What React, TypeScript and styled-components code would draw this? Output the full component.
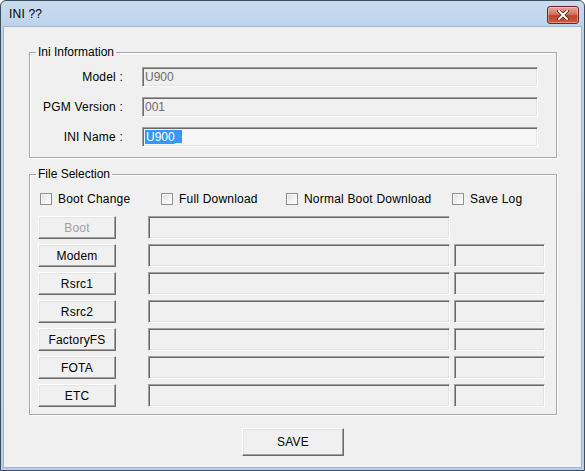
import styled, { createGlobalStyle } from 'styled-components';

const GlobalStyle = createGlobalStyle`
  html, body {
    margin: 0;
    padding: 0;
    background: #ffffff;
  }
  body {
    font-family: "Liberation Sans", Arial, sans-serif;
    font-size: 12px;
    color: #000;
  }
`;

// Window chrome
const Window = styled.div`
  box-sizing: border-box;
  width: 585px;
  height: 471px;
  display: flex;
  flex-direction: column;
  border: 1px solid #3e4e5e;
  border-radius: 6px 6px 0 0;
  background: linear-gradient(to bottom, #c9dbef 0%, #bcd2ea 30px, #b7cfe8 100%);
  padding: 0 2px 2px 2px;
  overflow: hidden;
`;

const TitleBar = styled.div`
  height: 25px;
  display: flex;
  align-items: center;
  justify-content: space-between;
  padding: 0 3px 0 6px;
`;

const Title = styled.span`
  font-size: 12px;
  color: #000;
  letter-spacing: 0.2px;
`;

const CloseButton = styled.div`
  width: 30px;
  height: 16px;
  margin-top: 2px;
  border: 1px solid #6d2620;
  border-radius: 3px;
  background: linear-gradient(to bottom, #e6a59b 0%, #d4735f 45%, #c2412c 55%, #cf5a3f 100%);
  box-shadow: inset 0 0 0 1px rgba(255, 255, 255, 0.35);
  display: flex;
  align-items: center;
  justify-content: center;
`;

const Content = styled.div`
  flex: 1;
  background: #f0f0f0;
  border: 1px solid #9fb6cc;
  display: flex;
  flex-direction: column;
  padding: 18px 24px 0 25px;
`;

// Group boxes
const Group = styled.fieldset<{ $top?: number }>`
  margin: ${(p) => p.$top ?? 0}px 0 0 0;
  padding: 0;
  border: 1px solid #a8a8a8;
  box-shadow: inset 1px 1px 0 #fff, 1px 1px 0 #fff;
`;

const Legend = styled.legend`
  margin-left: 6px;
  padding: 0 2px;
  line-height: 14px;
  font-size: 12px;
`;

const InfoGrid = styled.div`
  display: grid;
  grid-template-columns: 93px 396px;
  column-gap: 19px;
  row-gap: 10px;
  padding: 8px 0 10px 0;
  align-items: center;
`;

const FieldLabel = styled.span`
  text-align: right;
  letter-spacing: 0.2px;
`;

const InfoField = styled.div<{ $editable?: boolean }>`
  box-sizing: border-box;
  height: 20px;
  display: flex;
  align-items: center;
  padding-left: 2px;
  background: ${(p) => (p.$editable ? '#f7f7f7' : '#f0f0f0')};
  color: ${(p) => (p.$editable ? '#000' : '#6d6d6d')};
  border: 1px solid;
  border-color: #a0a0a0 #ffffff #ffffff #a0a0a0;
  box-shadow: inset 1px 1px 0 #696969, inset -1px -1px 0 #e3e3e3;
`;

const Selected = styled.span`
  background: #3399ff;
  color: #fff;
  padding: 0 1px;
  line-height: 14px;
`;

const FileBody = styled.div`
  display: flex;
  flex-direction: column;
  padding: 10px 0 7px 10px;
`;

const CheckRow = styled.div`
  display: flex;
  align-items: center;
  height: 16px;
  margin-bottom: 9px;
`;

const CheckItem = styled.label<{ $width?: number }>`
  display: flex;
  align-items: center;
  gap: 6px;
  width: ${(p) => (p.$width ? `${p.$width}px` : 'auto')};
  letter-spacing: 0.2px;
`;

const CheckBox = styled.span`
  box-sizing: border-box;
  width: 12px;
  height: 12px;
  border: 1px solid #8f8f8f;
  background: linear-gradient(135deg, #dcdcdc 0%, #f4f4f4 60%, #ffffff 100%);
  box-shadow: inset 1px 1px 0 #f8f8f8;
`;

const FileRows = styled.div`
  display: flex;
  flex-direction: column;
  gap: 5px;
`;

const FileRow = styled.div`
  display: flex;
  align-items: center;
  height: 23px;
  margin-left: -2px;
`;

const PushButton = styled.button<{ $disabled?: boolean }>`
  box-sizing: border-box;
  width: 78px;
  height: 23px;
  margin: 0 32px 0 0;
  padding: 0;
  font-family: inherit;
  font-size: 12px;
  letter-spacing: 0.2px;
  color: ${(p) => (p.$disabled ? '#a0a0a0' : '#000')};
  background: #f0f0f0;
  border: 1px solid;
  border-color: #ffffff #696969 #696969 #ffffff;
  box-shadow: inset -1px -1px 0 #a0a0a0, inset 1px 1px 0 #e3e3e3;
`;

const PathField = styled.div<{ $width: number }>`
  box-sizing: border-box;
  width: ${(p) => p.$width}px;
  height: 23px;
  margin-right: 4px;
  background: #f0f0f0;
  border: 1px solid;
  border-color: #a0a0a0 #ffffff #ffffff #a0a0a0;
  box-shadow: inset 1px 1px 0 #696969, inset -1px -1px 0 #e3e3e3;
`;

const Footer = styled.div`
  display: flex;
  justify-content: center;
  margin-top: 13px;
`;

const SaveButton = styled(PushButton)`
  width: 102px;
  height: 28px;
  margin: 0;
`;

const fileRows = [
  { name: 'Boot', disabled: true, short: false },
  { name: 'Modem', disabled: false, short: true },
  { name: 'Rsrc1', disabled: false, short: true },
  { name: 'Rsrc2', disabled: false, short: true },
  { name: 'FactoryFS', disabled: false, short: true },
  { name: 'FOTA', disabled: false, short: true },
  { name: 'ETC', disabled: false, short: true },
];

const options = [
  { label: 'Boot Change', width: 121 },
  { label: 'Full Download', width: 125 },
  { label: 'Normal Boot Download', width: 166 },
  { label: 'Save Log' },
];

export default function App() {
  return (
    <>
      <GlobalStyle />
      <Window>
        <TitleBar>
          <Title>INI ??</Title>
          <CloseButton>
            <svg width="12" height="10" viewBox="0 0 12 10">
              <path d="M2 1 L10 9 M10 1 L2 9" stroke="#5a1e16" strokeWidth="3.4" strokeLinecap="square" />
              <path d="M2 1 L10 9 M10 1 L2 9" stroke="#ffffff" strokeWidth="2" strokeLinecap="square" />
            </svg>
          </CloseButton>
        </TitleBar>
        <Content>
          <Group>
            <Legend>Ini Information</Legend>
            <InfoGrid>
              <FieldLabel>Model :</FieldLabel>
              <InfoField>U900</InfoField>
              <FieldLabel>PGM Version :</FieldLabel>
              <InfoField>001</InfoField>
              <FieldLabel>INI Name :</FieldLabel>
              <InfoField $editable>
                <Selected>U900_</Selected>
              </InfoField>
            </InfoGrid>
          </Group>

          <Group $top={9}>
            <Legend>File Selection</Legend>
            <FileBody>
              <CheckRow>
                {options.map((o) => (
                  <CheckItem key={o.label} $width={o.width}>
                    <CheckBox />
                    {o.label}
                  </CheckItem>
                ))}
              </CheckRow>
              <FileRows>
                {fileRows.map((r) => (
                  <FileRow key={r.name}>
                    <PushButton $disabled={r.disabled}>{r.name}</PushButton>
                    <PathField $width={302} />
                    {r.short && <PathField $width={91} />}
                  </FileRow>
                ))}
              </FileRows>
            </FileBody>
          </Group>

          <Footer>
            <SaveButton>SAVE</SaveButton>
          </Footer>
        </Content>
      </Window>
    </>
  );
}
